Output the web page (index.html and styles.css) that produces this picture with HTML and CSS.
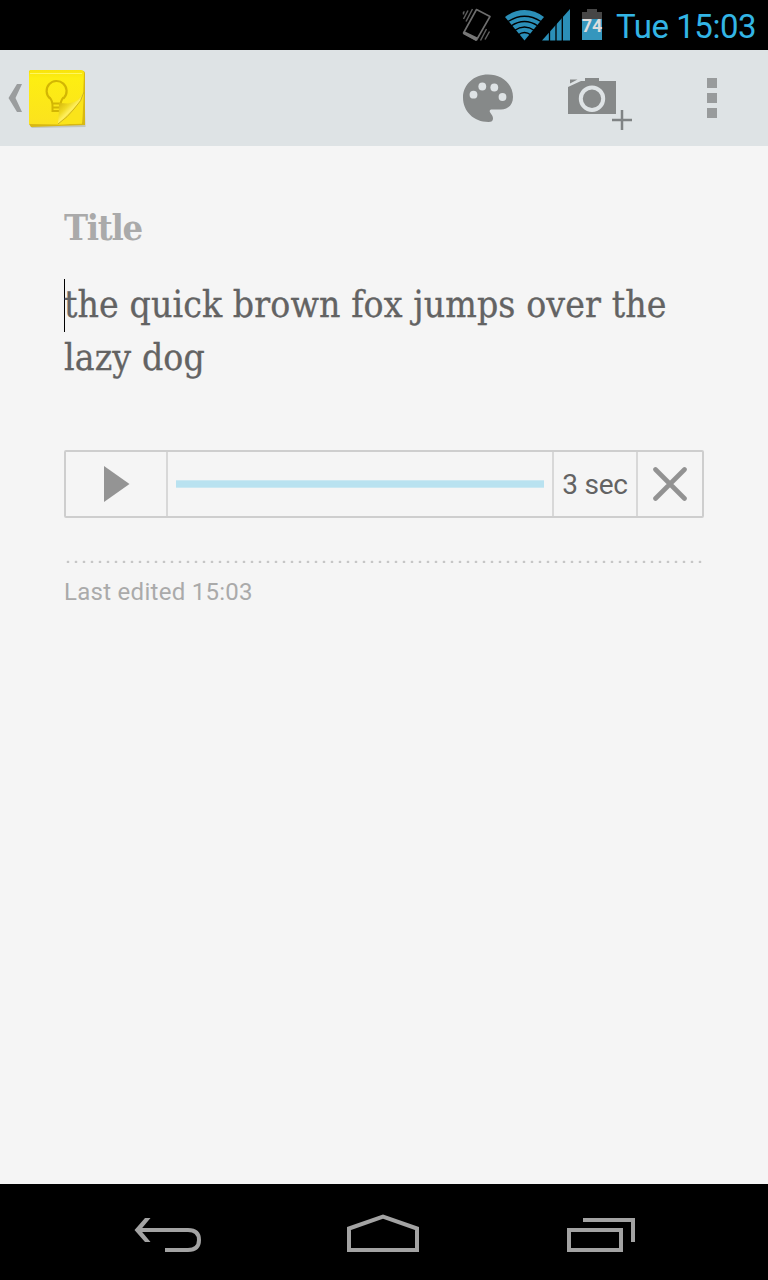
FILE: index.html
```
<!DOCTYPE html>
<html lang="en">
<head>
  <meta charset="UTF-8">
  <meta name="viewport" content="width=device-width, initial-scale=1.0">
  <title>Keep</title>
  <link rel="stylesheet" href="styles.css">
</head>
<body>
  <div class="status-bar">
    <svg class="vibrate" width="30" height="36" viewBox="462 7 30 36">
      <path d="M476.5 9.500 L490 16.500 L476.500 40 L463.500 33 Z" fill="none" stroke="#6e6e6e" stroke-width="1.600" stroke-linejoin="round"/>
      <path d="M464 31 L477.5 37.5 L476 41 L463 34 Z" fill="#777"/>
      <path d="M463.5 14.5v-2 l1-1 M463.5 19 L468 10.5 M466 21.5 L472.5 9 M480.500 40.500 L486.500 29 M485 39.500 L489.500 31.500" fill="none" stroke="#5e5e5e" stroke-width="1.500"/>
    </svg>
    <svg class="wifi" width="40" height="32" viewBox="505 9 40 32">
      <path d="M524.500 40.500 L505 17 Q514 10 524.500 10 Q535 10 544 17 Z" fill="#2b8fb8"/>
      <path d="M508 21.500 Q524.500 11 541 21.500 M511 26 Q524.500 17 538 26 M514.500 30.500 Q524.500 23.500 534.500 30.500 M518 35 Q524.500 30 531 35" fill="none" stroke="#000" stroke-width="1.400"/>
    </svg>
    <svg class="signal" width="29" height="32" viewBox="542 9 29 32">
      <path d="M542 40.500 L570 9 V40.500 Z" fill="#2b8fb8"/>
      <path d="M549.500 9v32 M556 9v32 M562.300 9v32" stroke="#000" stroke-width="1.300"/>
    </svg>
    <svg class="battery" width="22" height="32" viewBox="581 9 22 32">
      <path d="M587 9h10v3h5v7h-20v-7h5z" fill="#464646"/>
      <path d="M582 19h20v21h-20z" fill="#3596bd"/>
      <text x="592" y="32" class="battery-level">74</text>
    </svg>
    <span class="clock">Tue 15:03</span>
  </div>

  <header class="action-bar">
    <svg class="up" width="14" height="30" viewBox="8 83 14 30">
      <path d="M17 84h5l-6.500 14 6.500 14h-5l-8.500-14z" fill="#9a9d9e"/>
    </svg>
    <svg class="logo" width="60" height="62" viewBox="27 68 60 62">
      <defs>
        <linearGradient id="note" x1="0" y1="0" x2="0" y2="1">
          <stop offset="0" stop-color="#f8e30c"/>
          <stop offset=".15" stop-color="#fdee12"/>
          <stop offset="1" stop-color="#fbe21e"/>
        </linearGradient>
        <linearGradient id="curl" gradientUnits="userSpaceOnUse" x1="62" y1="102" x2="74" y2="114">
          <stop offset="0" stop-color="#d9bd10"/>
          <stop offset=".4" stop-color="#f0da24"/>
          <stop offset=".7" stop-color="#fff060"/>
          <stop offset="1" stop-color="#dcc01c"/>
        </linearGradient>
      </defs>
      <path d="M29 72l55-1 1.500 56-54 1z" fill="#c3c7bd"/>
      <path d="M29 71h54q2 0 2 3v51l-54 2-2-3z" fill="#d8b812"/>
      <path d="M30 70h51q3 0 3 3l-2 50.500-24 1-29-.500v-51q0-3 1-3z" fill="url(#note)"/>
      <path d="M30 73.500h52" stroke="#fff65e" stroke-width="1"/>
      <circle cx="56.600" cy="91" r="10" fill="none" stroke="#d2b604" stroke-width="2.200" stroke-dasharray="48 14.830" transform="rotate(132 56.600 91)"/>
      <path d="M49.500 97.500q3 3 3 8.500v5h8v-5q0-5.500 3-8.500M52.500 103.500h8M52.500 107.500h8" fill="none" stroke="#d2b604" stroke-width="2"/>
      <path d="M84 92l-2 31.500-24 1z" fill="#fae41a"/>
      <path d="M58 124q1-10 1-21l9 .500q12-1 16-12-2 9-10 17-6 8-16 15.500z" fill="url(#curl)"/>
      <path d="M84 92q-2 9-10 17-6 8-16 15" fill="none" stroke="#d0b51a" stroke-width="1"/>
    </svg>
    <div class="actions">
      <div class="action">
        <svg width="52" height="50" viewBox="462 73 52 50">
          <path d="M488 74.500c14 0 25 9.500 25 22.500 0 8-5 12.500-12 12.500h-9c-2.500 0-3 1.500-1.500 3.500 1.500 2 2.500 3.500 2.500 5.500 0 2.500-1.500 3.500-4.500 3.500-15 0-25.500-11-25.500-24.500 0-13 11-23 25-23z" fill="#868989"/>
          <g fill="#dee3e5">
            <circle cx="473.500" cy="94.700" r="3.900"/>
            <circle cx="482.300" cy="86.500" r="3.900"/>
            <circle cx="494.300" cy="87.500" r="3.900"/>
            <circle cx="502.500" cy="97" r="3.900"/>
          </g>
        </svg>
      </div>
      <div class="action">
        <svg class="camera" width="66" height="54" viewBox="567 77 66 54">
          <path d="M568 87l13-6h4v-3h14v3h17v33h-48zM570 79.500h7.500l-7.500 4z" fill="#868989"/>
          <circle cx="592" cy="98.700" r="11.200" fill="none" stroke="#dee3e5" stroke-width="4"/>
          <path d="M622 110v20M612 120h20" stroke="#7f8384" stroke-width="2.500"/>
        </svg>
      </div>
      <div class="action">
        <svg width="10" height="40" viewBox="0 0 10 40">
          <path d="M0 0h10v10H0zM0 15h10v10H0zM0 30h10v10H0z" fill="#989b9c"/>
        </svg>
      </div>
    </div>
  </header>

  <main class="note">
    <h1 class="note-title">Title</h1>
    <p class="note-text"><span class="cursor"></span><span class="line">the quick brown fox jumps over the</span> <span class="line">lazy dog</span></p>

    <div class="player">
      <div class="play">
        <svg width="26" height="36" viewBox="0 0 26 36"><path d="M0 0l25.500 18L0 36z" fill="#949494"/></svg>
      </div>
      <div class="track"><div class="progress"></div></div>
      <div class="duration">3 sec</div>
      <div class="remove">
        <svg width="34" height="34" viewBox="0 0 34 34"><path d="M2.500 2.500l29 29M31.500 2.500l-29 29" stroke="#929292" stroke-width="4.600" stroke-linecap="round"/></svg>
      </div>
    </div>

    <div class="divider"></div>
    <p class="edited">Last edited 15:03</p>
  </main>

  <nav class="nav-bar">
    <svg class="back" width="68" height="38" viewBox="134 1216 68 38">
      <path d="M138 1230h50q11 0 11 10t-11 10h-23" fill="none" stroke="#a3a3a3" stroke-width="4"/>
      <path d="M145 1218h5.500l-10 12 10 12h-5.500l-10.500-12z" fill="#a3a3a3"/>
    </svg>
    <svg class="home" width="74" height="40" viewBox="346 1213 74 40">
      <path d="M349 1250v-21.500l34-12 34 12v21.500z" fill="none" stroke="#a3a3a3" stroke-width="4"/>
    </svg>
    <svg class="recent" width="70" height="36" viewBox="566 1217 70 36">
      <path d="M569 1230h52v20h-52zM583 1220h50v22" fill="none" stroke="#a3a3a3" stroke-width="4"/>
    </svg>
  </nav>
</body>
</html>
```
FILE: styles.css
```
* {
  box-sizing: border-box;
}
body {
  margin: 0;
  height: 1280px;
  display: flex;
  flex-direction: column;
  background-color: #f5f5f5;
  font-family: Roboto, "Liberation Sans", sans-serif;
}
svg {
  display: block;
  flex: none;
}

/* status bar */
.status-bar {
  height: 50px;
  background-color: #000;
  display: flex;
  justify-content: flex-end;
  align-items: center;
  padding-right: 12px;
}
.wifi {
  margin-left: 13px;
}
.signal {
  margin-left: -3px;
}
.battery {
  margin-left: 10px;
}
.battery-level {
  font-size: 18px;
  font-weight: bold;
  fill: #ddd;
  text-anchor: middle;
}
.clock {
  width: 140px;
  margin-left: 13px;
  padding-top: 3px;
  font-size: 33px;
  line-height: 47px;
  letter-spacing: -0.45px;
  white-space: nowrap;
  color: #33b5e5;
}

/* action bar */
.action-bar {
  height: 96px;
  background-color: #dee3e5;
  display: flex;
  align-items: center;
  padding-left: 8px;
}
.logo {
  margin: 2px 0 0 5px;
}
.actions {
  margin-left: auto;
  display: flex;
}
.action {
  width: 112px;
  height: 96px;
  display: flex;
  align-items: center;
  justify-content: center;
}
.camera {
  margin-top: 12px;
}

/* note */
.note {
  flex: 1;
  padding: 55px 64px 0;
}
.note-title {
  margin: 0;
  font-family: "Roboto Slab", "DejaVu Serif Condensed", "DejaVu Serif", serif;
  font-size: 36px;
  line-height: 52px;
  letter-spacing: -1.3px;
  color: #aaa;
}
.note-text {
  position: relative;
  margin: 26px 0 0;
  font-family: "Roboto Slab", "DejaVu Serif Condensed", "DejaVu Serif", serif;
  font-size: 37px;
  line-height: 53px;
  letter-spacing: 0.1px;
  color: #636363;
  -webkit-text-stroke: 0.3px #636363;
}
.line {
  display: block;
  position: relative;
  top: -1px;
  white-space: nowrap;
}
.cursor {
  position: absolute;
  left: 0;
  top: 0;
  width: 1px;
  height: 53px;
  background-color: #000;
}

/* voice memo */
.player {
  display: flex;
  height: 68px;
  margin-top: 65px;
  border: 2px solid #cecece;
  border-radius: 2px;
}
.player > div {
  display: flex;
  align-items: center;
  justify-content: center;
}
.player .play {
  width: 102px;
  padding-left: 2px;
  border-right: 2px solid #d8d8d8;
}
.player .track {
  flex: 1;
  padding: 0 8px;
}
.progress {
  width: 100%;
  height: 8px;
  background-color: #b9e2f0;
  border: solid #cbe8f2;
  border-width: 1px 0;
}
.duration {
  width: 86px;
  border-left: 2px solid #d8d8d8;
  border-right: 2px solid #d8d8d8;
  font-size: 28px;
  letter-spacing: -0.2px;
  color: #636363;
}
.remove {
  width: 64px;
}
.divider {
  height: 3px;
  margin-top: 42px;
  background: radial-gradient(circle at 4px 2px, #c6c6c6 1.1px, transparent 1.7px) 0 0 / 8px 4px repeat-x;
}
.edited {
  margin: 13px 0 0;
  font-size: 24px;
  line-height: 32px;
  letter-spacing: 0.28px;
  color: #aaa;
}

/* navigation bar */
.nav-bar {
  height: 96px;
  background-color: #000;
  display: flex;
  padding: 32px 132px 0 134px;
}
.home {
  margin: -3px 0 0 144px;
}
.recent {
  margin: 1px 0 0 146px;
}
```
